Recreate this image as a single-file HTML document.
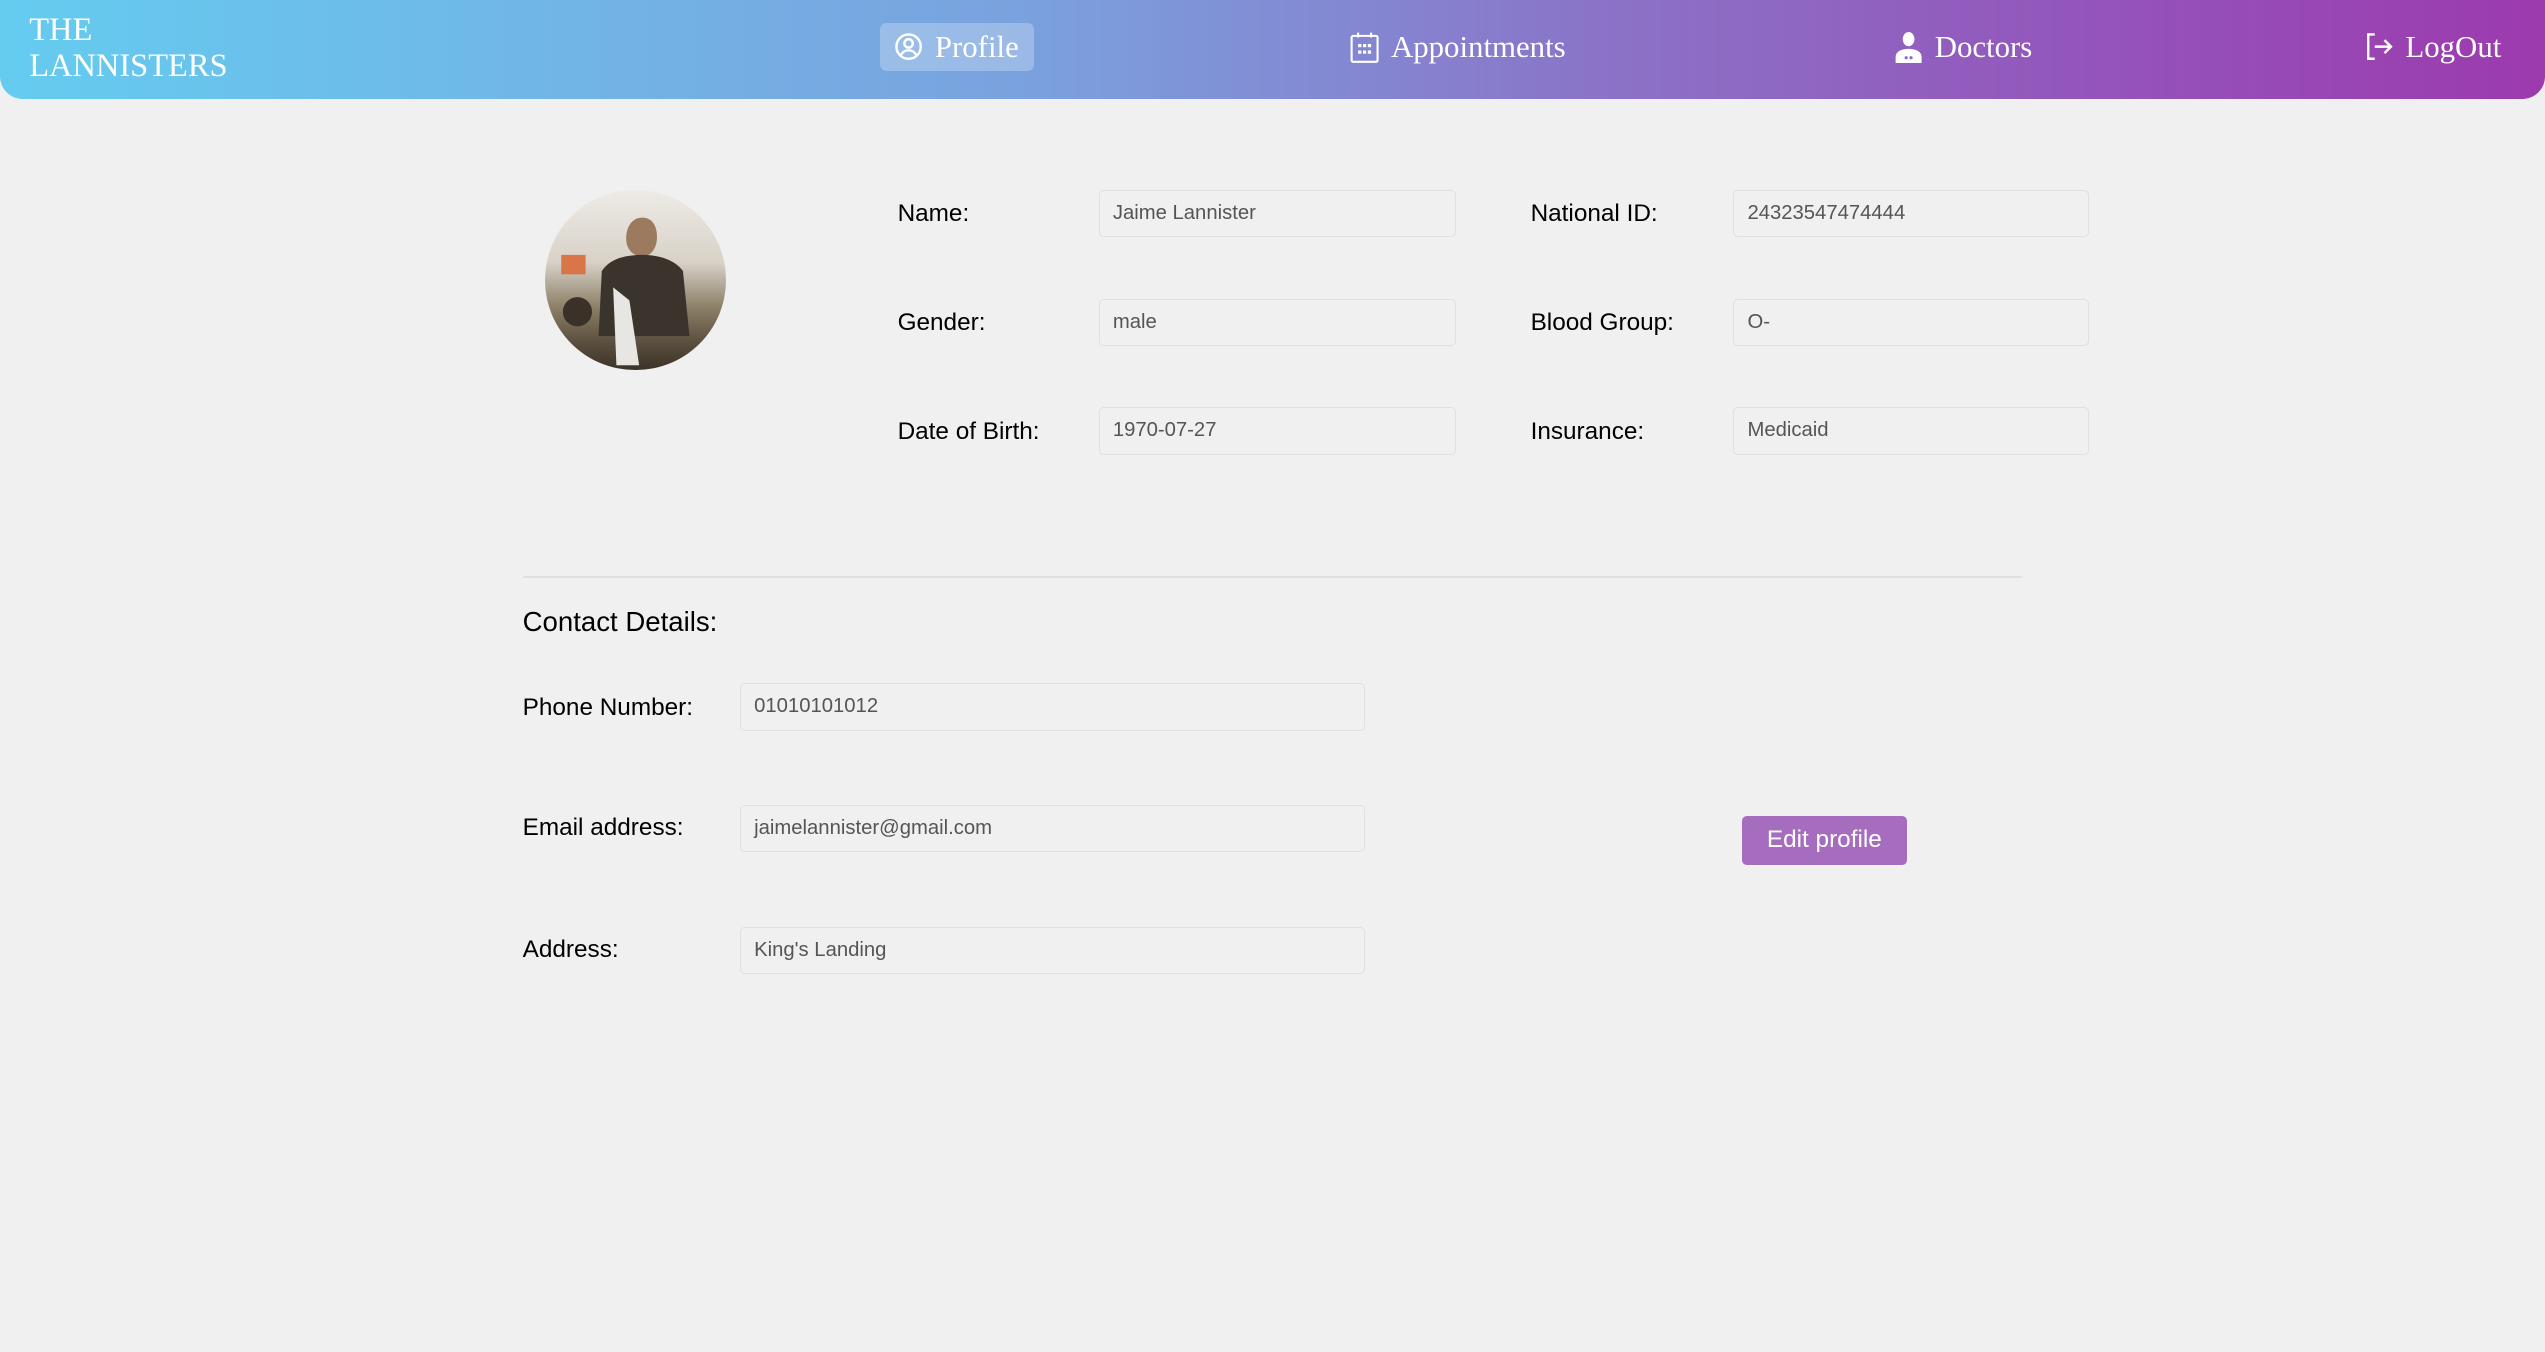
<!DOCTYPE html>
<html><head><meta charset="utf-8"><style>
html{zoom:1.62309}
body{margin:0;width:1568px;height:833px;background:#f0f0f0;font-family:"Liberation Sans",Arial,sans-serif;position:relative;overflow:hidden}
.hdr{position:absolute;left:0;top:0;width:1568px;height:61px;background:linear-gradient(90deg,#65ccf0 0%,#7aa2de 40%,#8c6fc6 65%,#9c3aae 100%);border-radius:0 0 14px 14px}
.logo{position:absolute;left:18px;top:8px;color:#fff;font-family:"Liberation Serif",serif;font-size:20px;line-height:22px}
.nav{position:absolute;top:14px;height:30px;color:#fff;font-family:"Liberation Serif",serif;font-size:19px;line-height:30px;display:flex;align-items:center;gap:7px}
.nav svg{display:block}
.act{background:rgba(255,255,255,0.25);border-radius:4px;padding:0 9px}
.l{position:absolute;font-size:15px;color:#000;transform:translateY(-50%)}
.in{position:absolute;height:28px;border:1px solid #e0e0e0;border-radius:3px;font-size:12.5px;color:#555;line-height:28px;padding-left:8px;box-sizing:content-box;background:#f0f0f0}
.av{position:absolute;left:336px;top:117px;width:111px;height:111px;border-radius:50%;overflow:hidden;background:linear-gradient(180deg,#eeebe6 0%,#d8d2c8 40%,#8d8068 65%,#5a4f3e 85%,#3b3428 100%)}
</style></head><body>
<div class="hdr">
<div class="logo">THE<br>LANNISTERS</div>
<div class="nav act" style="left:542px;width:77px"><svg width="18" height="18" viewBox="0 0 18 18" fill="none" stroke="#fff" stroke-width="1.5"><circle cx="9" cy="9" r="7.5"/><circle cx="9" cy="7" r="2.6"/><path d="M4.2 14.3c1.2-2.2 2.8-3 4.8-3s3.6.8 4.8 3"/></svg>Profile</div>
<div class="nav" style="left:832px"><svg width="18" height="20" viewBox="0 0 18 20" fill="none" stroke="#fff" stroke-width="1.3"><rect x="1" y="3" width="16" height="16" rx="1"/><path d="M5 1v3M13 1v3"/><g fill="#fff" stroke="none"><rect x="5" y="8" width="2" height="2"/><rect x="8" y="8" width="2" height="2"/><rect x="11" y="8" width="2" height="2"/><rect x="5" y="12" width="2" height="2"/><rect x="8" y="12" width="2" height="2"/><rect x="11" y="12" width="2" height="2"/></g></svg>Appointments</div>
<div class="nav" style="left:1167px"><svg width="18" height="20" viewBox="0 0 18 20" fill="#fff"><ellipse cx="9" cy="5" rx="3.6" ry="4.4"/><path d="M1 20v-4c0-3 3-5 8-5s8 2 8 5v4z"/><circle cx="7.5" cy="16.5" r="1" fill="#8a6cc8"/><circle cx="10.5" cy="16.5" r="1" fill="#8a6cc8"/></svg>Doctors</div>
<div class="nav" style="left:1457px"><svg width="18" height="18" viewBox="0 0 18 18" fill="none" stroke="#fff" stroke-width="1.5"><path d="M6 1.5H2v15h4"/><path d="M6 9h10M12 5l4 4-4 4"/></svg>LogOut</div>
</div>
<div class="av"><svg width="111" height="111" viewBox="0 0 111 111"><path d="M50 30c0-8 4-13 10-13s9 5 9 12-4 12-9 12-10-4-10-11z" fill="#9c7a60"/><path d="M35 50c5-8 15-10 25-10s20 3 25 10l4 40-56 0z" fill="#3a342c"/><path d="M42 60l10 8 6 40h-14z" fill="#e8e6e2"/><path d="M10 40h15v12H10z" fill="#d8764a"/><circle cx="20" cy="75" r="9" fill="#3a3128"/></svg></div>
<div class="l" style="left:553px;top:132px">Name:</div>
<div class="in" style="left:677px;top:117px;width:211px">Jaime Lannister</div>
<div class="l" style="left:943px;top:132px">National ID:</div>
<div class="in" style="left:1068px;top:117px;width:210px">24323547474444</div>
<div class="l" style="left:553px;top:199px">Gender:</div>
<div class="in" style="left:677px;top:184px;width:211px">male</div>
<div class="l" style="left:943px;top:199px">Blood Group:</div>
<div class="in" style="left:1068px;top:184px;width:210px">O-</div>
<div class="l" style="left:553px;top:266px">Date of Birth:</div>
<div class="in" style="left:677px;top:251px;width:211px">1970-07-27</div>
<div class="l" style="left:943px;top:266px">Insurance:</div>
<div class="in" style="left:1068px;top:251px;width:210px">Medicaid</div>
<div style="position:absolute;left:322px;top:355px;width:924px;height:1px;background:#e0e0e0"></div>
<div class="l" style="left:322px;top:383px;font-size:17px">Contact Details:</div>
<div class="l" style="left:322px;top:436px">Phone Number:</div>
<div class="in" style="left:456px;top:421px;width:376px">01010101012</div>
<div class="l" style="left:322px;top:510px">Email address:</div>
<div class="in" style="left:456px;top:496px;width:376px">jaimelannister@gmail.com</div>
<div class="l" style="left:322px;top:585px">Address:</div>
<div class="in" style="left:456px;top:571px;width:376px">King's Landing</div>
<div style="position:absolute;left:1073px;top:503px;width:102px;height:30px;background:#a66dbf;border-radius:3px;color:#fff;font-size:15px;line-height:30px;text-align:center">Edit profile</div>
</body></html>
